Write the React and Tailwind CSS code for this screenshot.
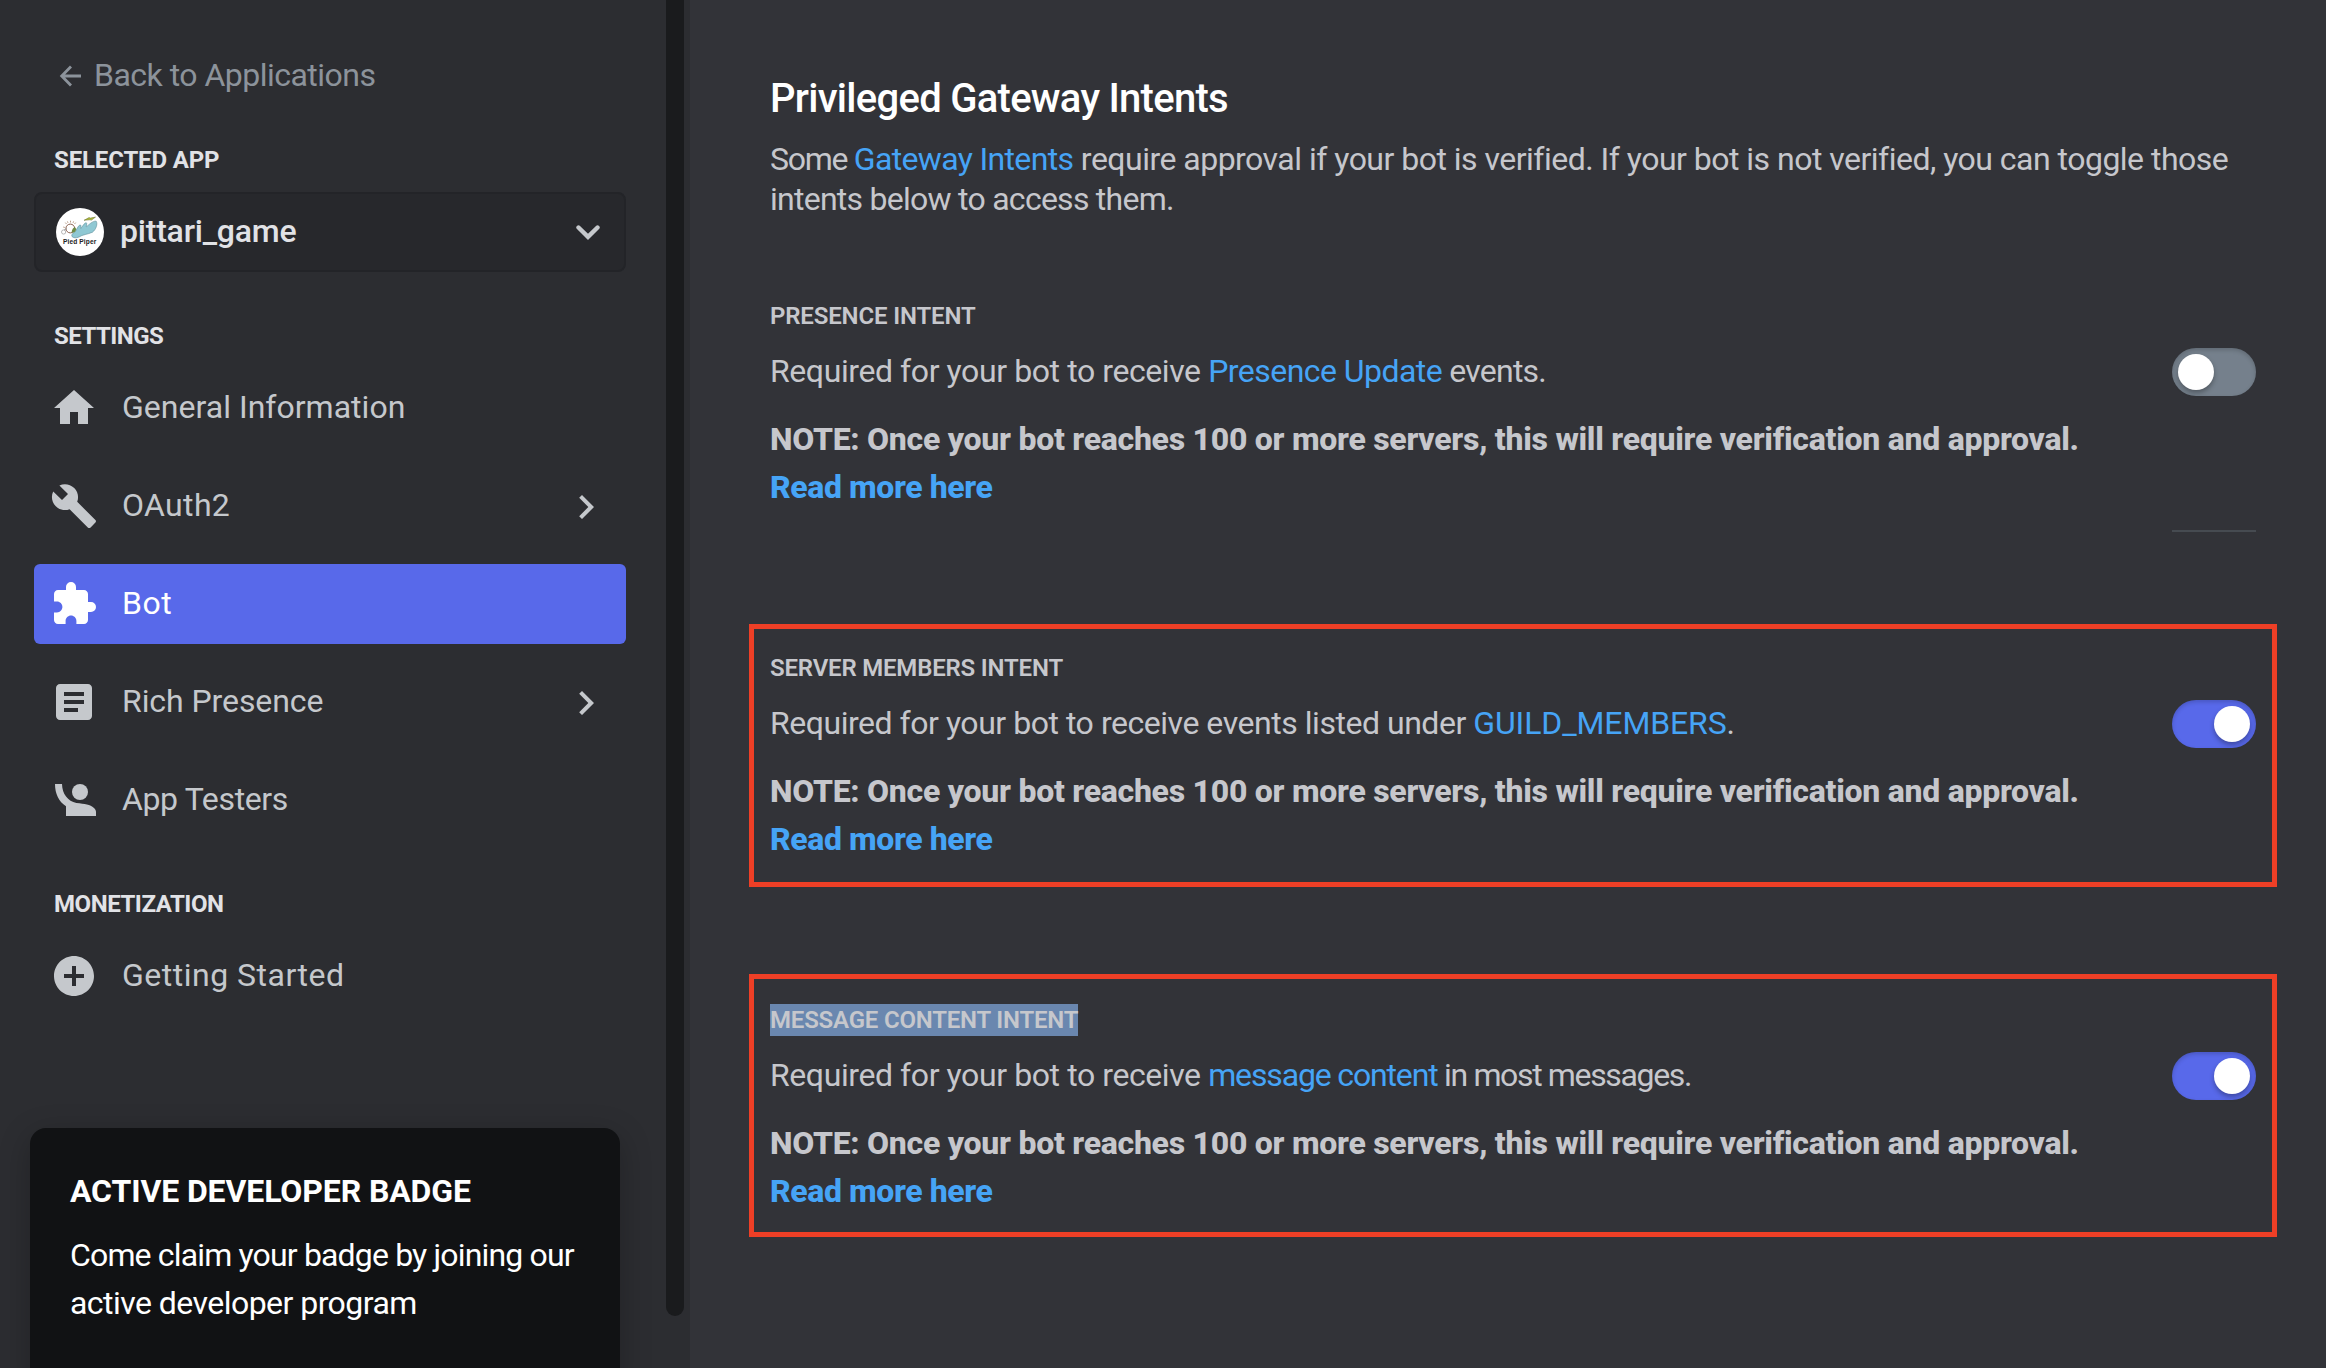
import React from "react";
import { MdHome, MdBuild, MdExtension, MdArticle, MdAddCircle, MdChevronRight } from "react-icons/md";

function PersonIcon({ className }) {
  return (
    <svg viewBox="0 0 24 24" fill="currentColor" className={className}>
      <circle cx="15" cy="8" r="4" />
      <path d="M2.5 4H6c.1 5 2.900 8.600 7.200 9.500C17.500 14 20 14 22 16c.7.700 1 1.200 1 2v2H8v-4.900C4.400 12.800 2.500 8.900 2.500 4z" />
    </svg>
  );
}

function AppAvatar() {
  return (
    <svg viewBox="0 0 48 48" className="size-12 shrink-0">
      <circle cx="24" cy="24" r="24" fill="#fff" />
      <g stroke="#a9866c" strokeWidth="0.8">
        <path d="M14.500 14.500v-1.800M10.500 16l-1.200-1.400M18.500 16l1.200-1.400M8.800 19.500l-1.600-.5M12 14.900l-.6-1.500M17 14.900l.6-1.500" />
      </g>
      <circle cx="14.300" cy="20.500" r="4.400" fill="#fff" stroke="#7d4f3c" strokeWidth="0.900" />
      <circle cx="7.600" cy="24" r="2.100" fill="none" stroke="#9a9a9a" strokeWidth="0.700" />
      <path d="M8 22l3-1.500" stroke="#8a8a8a" strokeWidth="0.700" />
      <path d="M16 28.500c-1-2 1.500-4 3.500-5 1.500-3 3.500-7 5-6.500 1 .5-.2 3.500.3 3.500 1.700-2 3.700-6 5.500-5.700 1.200.5-.5 4 0 4 2-1.500 6.500-6.300 9.900-5.600 1.700 2.800-.2 8.300-3.700 11-5 2.300-10 2.300-13.500 4.800-3 1.300-5.500 1-7-.5z" fill="#8fc8d3" stroke="#5a8c97" strokeWidth="0.600" />
      <path d="M15.500 24.500c.5-3.500 2.200-5.500 4-4.800 1.300 1.500.3 3.700-1.500 4.800z" fill="#6d8b45" />
      <path d="M28 12.300l5-2.700 1.500.5 5-1-4 3-2-.3z" fill="#b3bd3c" stroke="#5f6a2a" strokeWidth="0.500" />
      <text x="7" y="35.600" fontFamily="Liberation Sans, sans-serif" fontWeight="700" fontSize="6.600" textLength="33.300" fill="#222">
        Pied Piper
      </text>
    </svg>
  );
}

function SectionLabel({ className = "", children }) {
  return <h2 className={`pl-[54px] text-2xl leading-8 font-bold text-[#e1e2e6] ${className}`}>{children}</h2>;
}

function NavItem({ icon: Icon, label, tracking, active, expandable }) {
  return (
    <a
      className={`flex h-20 items-center rounded-md pl-4 ${active ? "bg-[#5869ea] text-white" : "text-[#c5c8cc]"}`}
    >
      <Icon className="size-12 shrink-0" />
      <span className={`ml-6 pb-0.5 text-[32px] leading-10 ${tracking}`}>{label}</span>
      {expandable && <MdChevronRight className="mt-0.5 mr-4 ml-auto size-12" />}
    </a>
  );
}

function Toggle({ on }) {
  return (
    <span
      className={`flex h-12 w-[84px] items-center rounded-full px-1.5 ${
        on ? "justify-end bg-[#5869ea]" : "justify-start bg-[#75808c]"
      } shadow-[inset_0_2px_4px_rgba(0,0,0,0.18)]`}
    >
      <span className="size-9 rounded-full bg-white shadow-[0_3px_5px_rgba(0,0,0,0.3)]" />
    </span>
  );
}

function Link({ className = "", children }) {
  return <a className={`text-[#46a4f6] ${className}`}>{children}</a>;
}

function Intent({ title, className, on, divider, children }) {
  return (
    <section className={`flex h-[263px] justify-between ${className}`}>
      <div>
        <h3 className="text-2xl leading-8 font-semibold">{title}</h3>
        <p className="mt-[15px] text-[32px] leading-[48px] whitespace-nowrap">{children}</p>
        <p className="mt-5 text-[32px] leading-[48px] font-extrabold whitespace-nowrap">
          <span className="block tracking-[-0.271px]">
            NOTE: Once your bot reaches 100 or more servers, this will require verification and approval.
          </span>
          <Link className="tracking-[-0.4px]">Read more here</Link>
        </p>
      </div>
      <div className="w-[84px] pt-12">
        <Toggle on={on} />
        {divider && <div className="mt-[134px] h-0.5 bg-[#464b51]" />}
      </div>
    </section>
  );
}

export default function App() {
  return (
    <div className="flex h-[1368px] w-[2326px] overflow-hidden bg-[#323338] font-['Roboto',sans-serif]">
      <aside className="flex w-[690px] shrink-0 bg-[#2c2d31]">
        <div className="w-[666px]">
          <a className="mt-[55px] flex h-10 items-center pl-[59px] text-[32px] leading-10 text-[#8c939b]">
            <svg viewBox="0 0 24 24" className="mt-0.5 size-6" fill="none" stroke="currentColor" strokeWidth="2.800">
              <path d="M22 12H3M12 2.500L2.700 12l9.300 9.500" />
            </svg>
            <span className="ml-[11px] tracking-[-0.52px]">Back to Applications</span>
          </a>

          <SectionLabel className="mt-[49px] tracking-[-0.15px]">SELECTED APP</SectionLabel>
          <div className="mt-4 ml-[34px] flex h-20 w-[592px] items-center rounded-lg border-2 border-[#232428] bg-[#27282c] pl-5 pr-6">
            <AppAvatar />
            <span className="ml-4 pb-0.5 text-[32px] leading-10 font-medium tracking-[-0.215px] text-[#e1e2e6]">
              pittari_game
            </span>
            <svg viewBox="0 0 24 15" className="ml-auto h-[15px] w-6" fill="none" stroke="#c5c8cc" strokeWidth="4.400" strokeLinecap="round">
              <path d="M2.500 2.500L12 11.800l9.500-9.300" />
            </svg>
          </div>

          <SectionLabel className="mt-12 tracking-[-0.536px]">SETTINGS</SectionLabel>
          <nav className="mt-4 ml-[34px] flex w-[592px] flex-col gap-[18px]">
            <NavItem icon={MdHome} label="General Information" tracking="tracking-[0.02px]" />
            <NavItem icon={MdBuild} label="OAuth2" tracking="tracking-[0.35px]" expandable />
            <NavItem icon={MdExtension} label="Bot" tracking="tracking-[0.5px]" active />
            <NavItem icon={MdArticle} label="Rich Presence" tracking="tracking-[-0.08px]" expandable />
            <NavItem icon={PersonIcon} label="App Testers" tracking="tracking-[-0.36px]" />
          </nav>

          <SectionLabel className="mt-12 tracking-[-0.451px]">MONETIZATION</SectionLabel>
          <nav className="mt-4 ml-[34px] w-[592px]">
            <NavItem icon={MdAddCircle} label="Getting Started" tracking="tracking-[0.5px]" />
          </nav>

          <div className="mt-28 ml-[30px] h-[260px] w-[590px] rounded-t-2xl bg-[#111214] pt-[43px] pl-10 text-[32px] text-white shadow-[0_8px_32px_rgba(0,0,0,0.24)]">
            <h2 className="leading-10 font-bold tracking-[-0.116px]">ACTIVE DEVELOPER BADGE</h2>
            <p className="mt-5 leading-[48px] whitespace-nowrap">
              <span className="block tracking-[-0.841px]">Come claim your badge by joining our</span>
              <span className="block tracking-[-0.543px]">active developer program</span>
            </p>
          </div>
        </div>
        <div className="h-[1316px] w-[18px] rounded-b-full bg-[#1a1b1d]" />
      </aside>

      <main className="flex w-[1587px] flex-col pl-[59px] text-[#c6c7cc]">
        <header className="mt-[75px] pl-[21px] whitespace-nowrap">
          <h1 className="text-[40px] leading-[48px] font-medium tracking-[-0.72px] text-white">
            Privileged Gateway Intents
          </h1>
          <p className="mt-4 text-[32px] leading-10">
            <span className="block">
              <span className="tracking-[-1.3px]">Some </span>
              <Link className="tracking-[-0.65px]">Gateway Intents</Link>
              <span className="tracking-[-0.515px]">
                {" "}
                require approval if your bot is verified. If your bot is not verified, you can toggle those
              </span>
            </span>
            <span className="block tracking-[-0.74px]">intents below to access them.</span>
          </p>
        </header>

        <Intent
          title={<span className="tracking-[-0.15px]">PRESENCE INTENT</span>}
          className="mt-[53px] px-[21px] pt-7"
          divider
        >
          <span className="tracking-[-0.41px]">Required for your bot to receive </span>
          <Link className="tracking-[-0.54px]">Presence Update</Link>
          <span className="tracking-[-0.8px]"> events.</span>
        </Intent>

        <Intent
          title={<span className="tracking-[-0.19px]">SERVER MEMBERS INTENT</span>}
          className="mt-[89px] border-5 border-[#ee3f26] px-4 pt-[23px]"
          on
        >
          <span className="tracking-[-0.465px]">Required for your bot to receive events listed under </span>
          <Link className="tracking-[-0.119px]">GUILD_MEMBERS</Link>.
        </Intent>

        <Intent
          title={<span className="inline-block h-8 bg-[#6a87af] tracking-[-0.2px]">MESSAGE CONTENT INTENT</span>}
          className="mt-[87px] border-5 border-[#ee3f26] px-4 pt-[25px]"
          on
        >
          <span className="tracking-[-0.41px]">Required for your bot to receive </span>
          <Link className="tracking-[-1.152px]">message content</Link>
          <span className="tracking-[-1.36px]"> in most messages.</span>
        </Intent>
      </main>
    </div>
  );
}
